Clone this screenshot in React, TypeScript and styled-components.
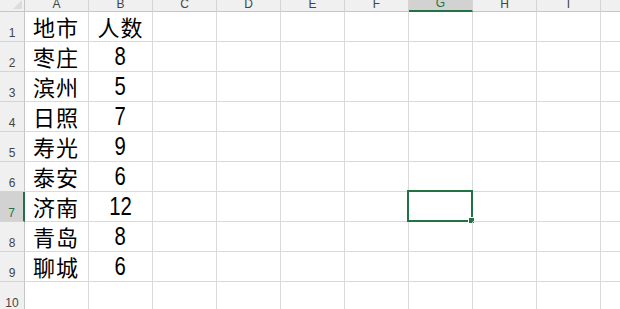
import React from 'react'
import styled, { createGlobalStyle } from 'styled-components'

const GlobalStyle = createGlobalStyle`
  html, body {
    margin: 0;
    padding: 0;
    background: #ffffff;
    overflow: hidden;
  }
`

const COLS = ['A', 'B', 'C', 'D', 'E', 'F', 'G', 'H', 'I', '']
const ACTIVE_COL = 6
const ACTIVE_ROW = 7

const data: [string, string][] = [
  ['地市', '人数'],
  ['枣庄', '8'],
  ['滨州', '5'],
  ['日照', '7'],
  ['寿光', '9'],
  ['泰安', '6'],
  ['济南', '12'],
  ['青岛', '8'],
  ['聊城', '6'],
]

const Sheet = styled.div`
  display: grid;
  grid-template-columns: 25px repeat(9, 64px) 40px;
  grid-template-rows: 12px repeat(10, 30px);
  width: 620px;
  height: 309px;
  overflow: hidden;
  font-family: 'Liberation Sans', 'Noto Sans CJK SC', sans-serif;
`

const Corner = styled.div`
  position: relative;
  background: #f0f0f0;
  border-right: 1px solid #c6c6c6;
  border-bottom: 1px solid #c6c6c6;
  overflow: hidden;
  &::after {
    content: '';
    position: absolute;
    right: 2px;
    bottom: 2px;
    width: 0;
    height: 0;
    border-left: 9px solid transparent;
    border-bottom: 9px solid #dcdcdc;
  }
`

const ColHead = styled.div<{ $active?: boolean }>`
  display: flex;
  align-items: flex-end;
  justify-content: center;
  overflow: hidden;
  background: ${(p) => (p.$active ? '#d2d2d2' : '#f0f0f0')};
  border-right: 1px solid #d4d4d4;
  border-bottom: ${(p) => (p.$active ? '2px solid #217346' : '1px solid #c6c6c6')};
  color: ${(p) => (p.$active ? '#217346' : '#444444')};
  font-size: 12px;
  line-height: 12px;
  padding-bottom: 1px;
  box-sizing: border-box;
`

const RowHead = styled.div<{ $active?: boolean }>`
  display: flex;
  align-items: flex-end;
  justify-content: center;
  background: ${(p) => (p.$active ? '#d2d2d2' : '#f0f0f0')};
  border-right: ${(p) => (p.$active ? '2px solid #217346' : '1px solid #c6c6c6')};
  border-bottom: 1px solid #d4d4d4;
  color: ${(p) => (p.$active ? '#217346' : '#444444')};
  font-size: 12px;
  padding-bottom: 1px;
  box-sizing: border-box;
`

const Cell = styled.div<{ $align?: 'left' | 'center' }>`
  position: relative;
  display: flex;
  align-items: flex-end;
  justify-content: ${(p) => (p.$align === 'center' ? 'center' : 'flex-start')};
  padding-left: ${(p) => (p.$align === 'center' ? '0' : '8px')};
  padding-bottom: 2px;
  border-right: 1px solid #dadada;
  border-bottom: 1px solid #dadada;
  box-sizing: border-box;
  color: #000000;
  white-space: nowrap;
`

const CnText = styled.span`
  font-family: 'Noto Sans CJK SC', sans-serif;
  font-size: 22px;
  line-height: 26px;
  letter-spacing: 1px;
`

const NumText = styled.span`
  display: inline-block;
  font-family: 'Liberation Sans', sans-serif;
  font-size: 26px;
  line-height: 26px;
  transform: scaleX(0.78);
`

const Selection = styled.div`
  position: absolute;
  top: -2px;
  left: -2px;
  right: -1px;
  bottom: -1px;
  border: 2px solid #217346;
  pointer-events: none;
  &::after {
    content: '';
    position: absolute;
    right: -4px;
    bottom: -4px;
    width: 5px;
    height: 5px;
    background: #217346;
    border: 1px solid #ffffff;
  }
`

function renderValue(v: string) {
  if (/^[0-9]+$/.test(v)) return <NumText>{v}</NumText>
  return <CnText>{v}</CnText>
}

export default function App() {
  const rows = Array.from({ length: 10 }, (_, i) => i + 1)
  return (
    <>
      <GlobalStyle />
      <Sheet>
        <Corner />
        {COLS.map((c, i) => (
          <ColHead key={'h' + i} $active={i === ACTIVE_COL}>
            {c}
          </ColHead>
        ))}
        {rows.map((r) => (
          <React.Fragment key={r}>
            <RowHead $active={r === ACTIVE_ROW}>{r}</RowHead>
            {COLS.map((_, ci) => {
              const row = data[r - 1]
              const value = row && ci < 2 ? row[ci] : ''
              return (
                <Cell key={ci} $align={ci === 1 ? 'center' : 'left'}>
                  {value && renderValue(value)}
                  {r === ACTIVE_ROW && ci === ACTIVE_COL && <Selection />}
                </Cell>
              )
            })}
          </React.Fragment>
        ))}
      </Sheet>
    </>
  )
}
